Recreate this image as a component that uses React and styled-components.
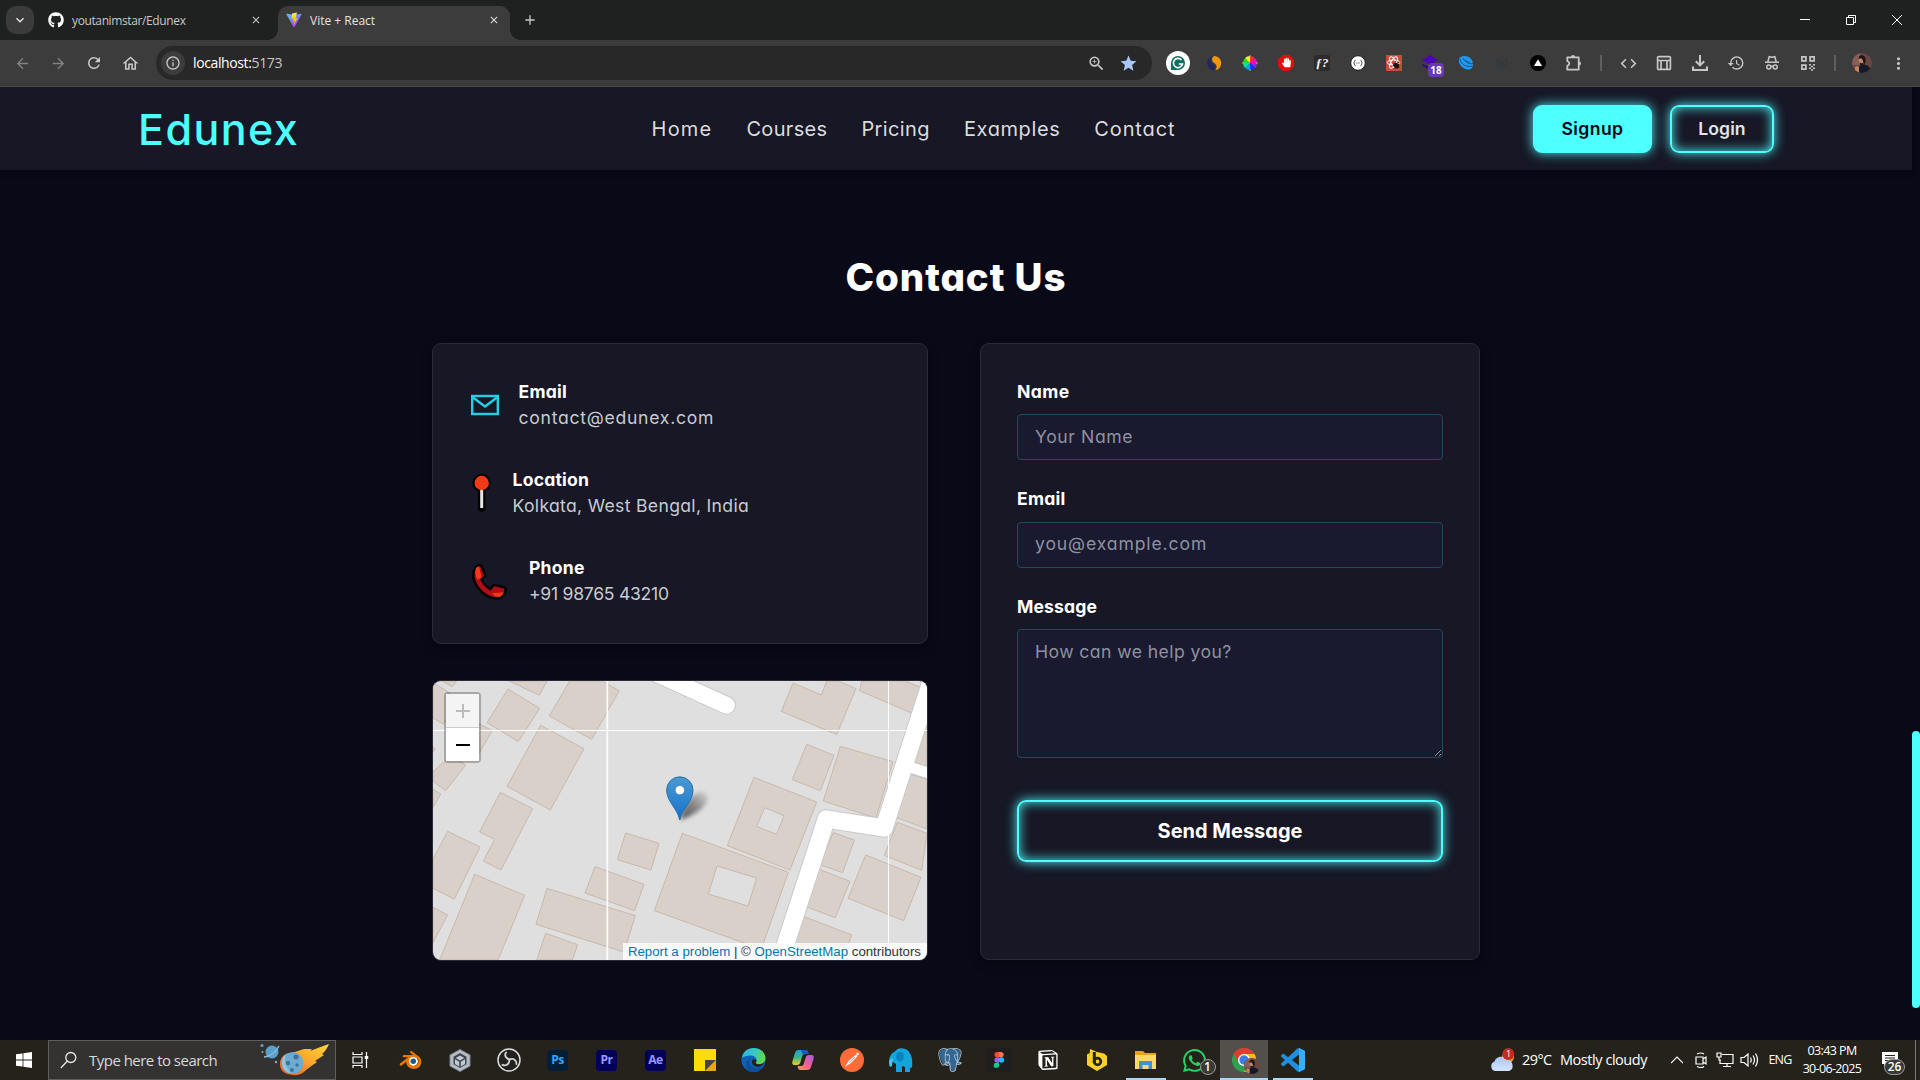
import React from "react";
import styled, { createGlobalStyle } from "styled-components";
import { FaGithub, FaWordpressSimple, FaHandPaper } from "react-icons/fa";
import { SiBlender, SiPostgresql, SiNotion, SiWhatsapp } from "react-icons/si";
import {
  MdArrowBack, MdArrowForward, MdRefresh, MdOutlineHome, MdInfoOutline, MdZoomIn, MdStar,
  MdCode, MdHistory, MdMoreVert, MdClose, MdAdd, MdKeyboardArrowDown,
} from "react-icons/md";

const BG = "#090917";
const CYAN = "#4dffff";
const SYSTEM = '"Open Sans", "Noto Sans", sans-serif';
const BRAND = 'Inter, "Open Sans", sans-serif';

const Global = createGlobalStyle`
  * { box-sizing: border-box; }
  html, body { margin: 0; padding: 0; background: ${BG}; overflow: hidden; }
  button, input, textarea { font: inherit; margin: 0; }
  svg { display: block; flex: none; }
`;

const Screen = styled.div`
  display: flex;
  flex-direction: column;
  width: 1920px;
  height: 1080px;
  overflow: hidden;
  font-family: ${SYSTEM};
`;

const Label = styled.span`
  font-size: ${(p) => p.$size}px;
  font-weight: ${(p) => p.$weight || 400};
  letter-spacing: ${(p) => p.$ls || 0}px;
  color: ${(p) => p.$color || "inherit"};
  line-height: ${(p) => p.$lh || 20}px;
  white-space: nowrap;
`;

/* ---------- browser frame ---------- */

const TabStrip = styled.div`
  display: flex;
  align-items: flex-start;
  height: 40px;
  padding: 6px 0 0 6px;
  background: #1f2120;
  color: #c7c7c7;
`;
const TabMenu = styled.div`
  width: 28px;
  height: 28px;
  border-radius: 10px;
  background: #3a3b3a;
  color: #e6e6e6;
  display: grid;
  place-items: center;
`;
const Tab = styled.div`
  position: relative;
  display: flex;
  align-items: center;
  width: ${(p) => p.$w}px;
  height: 34px;
  padding: 0 ${(p) => p.$pr}px 6px ${(p) => p.$pl}px;
  gap: 8px;
  color: ${(p) => (p.$active ? "#e3e3e3" : "#c7c7c7")};
  background: ${(p) => (p.$active ? "#3c3c3c" : "transparent")};
  border-radius: 10px 10px 0 0;
`;
const TabTitle = styled.div`
  flex: 1;
  display: flex;
  padding-top: 2px;
`;
const TabFoot = styled.i`
  position: absolute;
  bottom: 0;
  ${(p) => p.$side}: -10px;
  width: 10px;
  height: 10px;
  background: radial-gradient(circle at ${(p) => (p.$side === "left" ? "0 0" : "100% 0")}, transparent 9.5px, #3c3c3c 10px);
`;
const NewTab = styled.div`
  width: 20px;
  height: 28px;
  margin-left: 10px;
  display: grid;
  place-items: center;
`;
const WindowButtons = styled.div`
  display: flex;
  margin-left: auto;
  color: #fff;
`;
const WinButton = styled.div`
  width: 46px;
  height: 28px;
  display: grid;
  place-items: center;
`;
const Toolbar = styled.div`
  display: flex;
  align-items: center;
  height: 47px;
  padding: 0 4px;
  background: #3c3c3c;
  border-bottom: 1px solid #4b4b49;
  color: #c7c7c7;
`;
const Slot = styled.div`
  position: relative;
  flex: none;
  width: ${(p) => p.$w || 36}px;
  height: 36px;
  display: grid;
  place-items: center;
  opacity: ${(p) => (p.$dim ? 0.5 : 1)};
`;
const AddressBar = styled.div`
  display: flex;
  align-items: center;
  width: 996px;
  height: 34px;
  margin: 0 8px;
  padding: 0 8px 0 5px;
  border-radius: 17px;
  background: #282828;
`;
const SiteInfo = styled.div`
  width: 24px;
  height: 24px;
  margin-right: 8px;
  border-radius: 12px;
  background: #3c3c3c;
  display: grid;
  place-items: center;
`;
const Url = styled.div`
  flex: 1;
  display: flex;
  color: #c7c7c7;
`;
const Divider = styled.div`
  width: 2px;
  height: 16px;
  margin: 0 8px;
  background: #5e5e5e;
`;
const ExtBadge = styled.div`
  position: absolute;
  left: 16px;
  top: 18px;
  width: 16px;
  height: 14px;
  border-radius: 4px;
  background: #6a37b8;
  color: #fff;
  font: 700 10px/14px ${SYSTEM};
  text-align: center;
`;
const FontExt = styled.div`
  width: 16px;
  height: 16px;
  border-radius: 2px;
  background: #2c2c2c;
  color: #f2f2f2;
  font: italic 700 13px/15px "Liberation Serif", serif;
  text-align: center;
`;

/* ---------- page ---------- */

const Viewport = styled.div`
  display: flex;
  height: 953px;
  background: ${BG};
  font-family: ${BRAND};
  font-feature-settings: "cv11";
`;
const Page = styled.div`
  width: 1912px;
`;
const Scrollbar = styled.div`
  width: 8px;
  padding-top: 644px;
`;
const Thumb = styled.div`
  height: 277px;
  border-radius: 4px;
  background: ${CYAN};
`;
const Header = styled.header`
  display: flex;
  align-items: center;
  justify-content: space-between;
  height: 83px;
  padding: 0 138px;
  background: #171726;
  box-shadow: 0 2px 6px rgba(0, 0, 0, 0.25);
`;
const Logo = styled.div`
  display: flex;
  width: 156px;
`;
const Nav = styled.nav`
  display: flex;
  gap: 34px;
`;
const Actions = styled.div`
  display: flex;
  gap: 18px;
`;
const GlowButton = styled.button`
  width: ${(p) => p.$w}px;
  height: ${(p) => p.$h}px;
  padding: 0;
  display: flex;
  align-items: center;
  justify-content: center;
  border: 2px solid ${CYAN};
  border-radius: 9px;
  color: ${(p) => (p.$filled ? "#080815" : "#e4e4e6")};
  background: ${(p) => (p.$filled ? CYAN : "transparent")};
  box-shadow: 0 0 12px rgba(77, 255, 255, 0.95)${(p) => (p.$filled ? "" : ", inset 0 0 12px rgba(77, 255, 255, 0.95)")};
`;
const Section = styled.section`
  display: flex;
  flex-direction: column;
  align-items: center;
  padding-top: 77px;
`;
const Columns = styled.div`
  display: flex;
  align-items: flex-start;
  justify-content: space-between;
  width: 1048px;
  margin-top: 36px;
`;
const LeftColumn = styled.div`
  display: flex;
  flex-direction: column;
  gap: 36px;
  width: 496px;
`;
const Card = styled.div`
  width: ${(p) => p.$w}px;
  height: ${(p) => p.$h}px;
  padding: 35px 36px;
  border: 1px solid #2a2a38;
  border-radius: 9px;
  background: #171725;
  box-shadow: 0 4px 12px rgba(0, 0, 0, 0.2);
`;
const InfoRow = styled.div`
  display: flex;
  gap: 19px;
  height: 88px;
`;
const InfoIcon = styled.div`
  width: ${(p) => p.$w}px;
  height: 52px;
  display: flex;
  align-items: center;
`;
const InfoText = styled.div`
  display: flex;
  flex-direction: column;
`;
const MapCard = styled.div`
  position: relative;
  width: 496px;
  height: 281px;
  border: 1px solid #2a2a38;
  border-radius: 9px;
  overflow: hidden;
  font-family: "Liberation Sans", Arial, sans-serif;
`;
const ZoomControl = styled.div`
  position: absolute;
  left: 11px;
  top: 11px;
  width: 37px;
  border: 2px solid rgba(0, 0, 0, 0.25);
  border-radius: 4px;
  background-clip: padding-box;
`;
const ZoomKey = styled.div`
  height: ${(p) => p.$h}px;
  display: grid;
  place-items: center;
  background: ${(p) => (p.$off ? "#f4f4f4" : "#fff")};
  border-bottom: ${(p) => (p.$off ? "1px solid #ccc" : "0")};
`;
const Attribution = styled.div`
  position: absolute;
  right: 0;
  bottom: 0;
  height: 17px;
  padding: 0 6px 0 5px;
  background: rgba(255, 255, 255, 0.8);
  color: #333;
  font-size: 13.25px;
  line-height: 17px;
  white-space: nowrap;
  a { color: #0078a8; }
`;
const Field = styled.div`
  display: flex;
  flex-direction: column;
  gap: ${(p) => p.$gap}px;
  height: ${(p) => p.$h}px;
`;
const inputLook = `
  width: 426px;
  border: 1px solid #214a5c;
  border-radius: 4px;
  background: #19192f;
  color: #fff;
  outline: none;
  font-family: ${BRAND};
  font-size: 17.6px;
  line-height: 26px;
  font-feature-settings: "cv11";
  &::placeholder { color: #8e92a0; opacity: 1; }
`;
const Input = styled.input`
  ${inputLook}
  height: 46px;
  padding: 0 17px ${(p) => p.$lift}px;
  letter-spacing: ${(p) => p.$ls}px;
`;
const TextArea = styled.textarea`
  ${inputLook}
  height: 129px;
  padding: 9px 17px;
  letter-spacing: ${(p) => p.$ls}px;
`;

/* ---------- taskbar ---------- */

const Taskbar = styled.div`
  display: flex;
  align-items: stretch;
  height: 40px;
  background: #25221c;
  color: #fff;
`;
const Start = styled.div`
  width: 48px;
  display: grid;
  place-items: center;
`;
const Search = styled.div`
  display: flex;
  align-items: center;
  width: 288px;
  padding: 0 5px 0 11px;
  gap: 12px;
  border: 1px solid #5f5e5c;
  background: #333231;
  color: #d9d9d9;
  & > span { flex: 1; }
`;
const AppSlot = styled.div`
  position: relative;
  width: 48px;
  margin-right: ${(p) => p.$gap || 1}px;
  display: grid;
  place-items: center;
  background: ${(p) => (p.$active ? "#53504b" : "transparent")};
  &::after {
    content: "";
    display: ${(p) => (p.$open ? "block" : "none")};
    position: absolute;
    bottom: 0;
    left: ${(p) => (p.$active ? 0 : 4)}px;
    right: ${(p) => (p.$active ? 0 : 4)}px;
    height: 2px;
    background: #a9d8f5;
  }
`;
const Adobe = styled.div`
  width: 21px;
  height: 21px;
  border-radius: 4px;
  background: ${(p) => p.$bg};
  color: ${(p) => p.$fg};
  font: 700 12px/20px ${SYSTEM};
  letter-spacing: -0.5px;
  text-align: center;
`;
const CountBadge = styled.div`
  position: absolute;
  left: ${(p) => p.$x}px;
  top: ${(p) => p.$y}px;
  width: ${(p) => p.$w}px;
  height: 16px;
  border: 1px solid #9a9a98;
  border-radius: 8px;
  background: #3a3936;
  font: 600 12px/14px ${SYSTEM};
  text-align: center;
`;
const Tray = styled.div`
  display: flex;
  align-items: center;
  margin-left: auto;
`;
const TrayItem = styled.div`
  position: relative;
  width: ${(p) => p.$w}px;
  height: 40px;
  display: flex;
  align-items: center;
  justify-content: ${(p) => p.$align || "center"};
`;
const Clock = styled.div`
  width: 66px;
  display: flex;
  flex-direction: column;
  align-items: center;
`;
const ShowDesktop = styled.div`
  width: 5px;
  height: 40px;
  border-left: 1px solid #7a7873;
`;
const ChromeFace = styled.div`
  position: absolute;
  left: 24px;
  top: 18px;
`;
const WeatherBadge = styled.span`
  position: absolute;
  left: 15px;
  top: 8px;
  width: 7px;
  font-size: 9px;
  line-height: 12px;
  text-align: center;
`;

/* ---------- drawings ---------- */

const ViteLogo = () => (
  <svg width="16" height="16" viewBox="0 0 32 32">
    <defs>
      <linearGradient id="va" x1="0" y1="0" x2="0.6" y2="1"><stop offset="0" stopColor="#41d1ff" /><stop offset="1" stopColor="#bd34fe" /></linearGradient>
      <linearGradient id="vb" x1="0" y1="0" x2="0" y2="1"><stop offset="0" stopColor="#ffea83" /><stop offset="0.2" stopColor="#ffdd35" /><stop offset="1" stopColor="#ffa800" /></linearGradient>
    </defs>
    <path d="M31 5 17 30c-.4.8-1.4.8-2 0L1 5c-.4-.8.2-2 1.200-1.600L16 6l13.800-2.600C31 3 31.600 4.200 31 5Z" fill="url(#va)" />
    <path d="M22 1 12 3l-.8 11 4-.8-1 5.500 3-.8-1.600 7.600L23 12l-4 .8Z" fill="url(#vb)" />
  </svg>
);
const Grammarly = () => (
  <svg width="24" height="24" viewBox="0 0 24 24">
    <circle cx="12" cy="12" r="12" fill="#fff" />
    <path d="M5 19V12a7 7 0 1 1 7 7Z" fill="#10705f" />
    <path d="M15.500 9A4.600 4.600 0 1 0 16.500 13H12.800" fill="none" stroke="#fff" strokeWidth="1.600" />
  </svg>
);
const SwirlExt = () => (
  <svg width="16" height="16" viewBox="0 0 16 16">
    <path d="M7.500 1A4.800 4.800 0 0 0 7 9.500 3.300 3.300 0 0 1 8 15.500 7.300 7.300 0 0 1 3.500 3 5 5 0 0 1 7.500 1Z" fill="#20295a" />
    <path d="M8 1c4 0 7.200 3 7.200 7S12.500 15 9 15.300C11.500 13 11 9.500 8.300 8 5.500 6.300 5.500 2.500 8 1Z" fill="#f6940c" />
  </svg>
);
const WHEEL = ["#ff2d2d", "#ff00c8", "#8a2be2", "#1030ff", "#00a2ff", "#00e5a0", "#20e020", "#e8ff20"];
const ColorWheel = () => (
  <svg width="16" height="16" viewBox="-8 -8 16 16">
    {WHEEL.map((c, i) => (
      <path key={c} d="M0 0V-7A7 7 0 0 1 4.950 -4.950Z" fill={c} transform={`rotate(${i * 45})`} />
    ))}
    <path d="M0-8v2M0 8v-2M-8 0h2M8 0h-2" stroke="#aaa" />
  </svg>
);
const AdBlock = () => (
  <svg width="16" height="16" viewBox="0 0 16 16">
    <path d="M4.700 0h6.600L16 4.700v6.600L11.300 16H4.700L0 11.300V4.700Z" fill="#e40d0d" />
    <g transform="translate(3.400 2.600)"><FaHandPaper size={10} color="#fff" /></g>
  </svg>
);
const JsonExt = () => (
  <svg width="16" height="16" viewBox="0 0 16 16">
    <circle cx="8" cy="8" r="7.300" fill="#fff" stroke="#1d1d1d" strokeWidth="1" />
    <path d="M5.500 5.300c-1.500 0-.6 2.100-1.800 2.700 1.200.6.3 2.700 1.800 2.700M10.500 5.300c1.500 0 .6 2.100 1.800 2.700-1.200.6-.3 2.700-1.800 2.700M6.500 8h1M8.500 8h1" fill="none" stroke="#333" />
  </svg>
);
const ReactExt = () => (
  <svg width="16" height="16" viewBox="0 0 16 16">
    <rect width="16" height="16" fill="#cf4a36" />
    <g fill="none" stroke="#fff" strokeWidth="1">
      <ellipse cx="7.500" cy="7.500" rx="6.300" ry="2.500" />
      <ellipse cx="7.500" cy="7.500" rx="6.300" ry="2.500" transform="rotate(60 7.500 7.500)" />
      <ellipse cx="7.500" cy="7.500" rx="6.300" ry="2.500" transform="rotate(120 7.500 7.500)" />
    </g>
    <ellipse cx="10.200" cy="10.600" rx="2.600" ry="3.200" fill="#1b1513" transform="rotate(-35 10.200 10.600)" />
    <path d="M6.500 10.500 13 9.500M7.500 13.500 13.500 12M9 7l1.500-1.500M12 8l1.500-1" stroke="#1b1513" strokeWidth=".8" />
  </svg>
);
const CubeExt = () => (
  <svg width="16" height="16" viewBox="0 0 16 16">
    <path d="M8 0 16 5 8 9.500 0 5Z" fill="#4a06b8" />
    <path d="M1 9 8 13v2L0 10.500Z" fill="#2d0580" />
  </svg>
);
const DiscExt = () => (
  <svg width="16" height="16" viewBox="0 0 16 16">
    <path d="M4 1.500C9-.5 15.500 4 15 9.500c0 3-2 5-4.500 5C5 14.500 1 10 .8 5.500.8 3.500 2 2 4 1.500Z" fill="#1c9bf0" />
    <path d="M2 4c1 5 6 9 12.500 7M5 3c1 3 5 6.500 10 5.500M7 4.500c1 2 3 3 5 2.500" fill="none" stroke="#174e80" strokeWidth=".9" />
  </svg>
);
const VercelExt = () => (
  <svg width="16" height="16" viewBox="0 0 16 16"><circle cx="8" cy="8" r="8" fill="#000" /><path d="M8 4.300 12 11H4Z" fill="#fff" /></svg>
);
const PuzzleIcon = () => (
  <svg width="18" height="18" viewBox="0 0 18 18">
    <path d="M2.300 3.300h11.400v12.400H2.300v-3.900q2-.6 2-2.300t-2-2.300Z" fill="none" stroke="currentColor" strokeWidth="1.800" strokeLinejoin="round" />
    <path d="M6 3a2 2 0 0 1 4 0ZM14 7.500a2 2 0 0 1 0 4Z" fill="currentColor" />
  </svg>
);
const PanelIcon = () => (
  <svg width="16" height="16" viewBox="0 0 16 16" fill="none" stroke="currentColor" strokeWidth="1.700">
    <rect x="1.600" y="1.600" width="12.800" height="12.800" rx="1" /><path d="M1.600 5.500h12.800M5 5.500v9M11 5.500v9" />
  </svg>
);
const Download = () => (
  <svg width="16" height="16" viewBox="0 0 16 16" fill="none" stroke="currentColor" strokeWidth="2">
    <path d="M8 0v10M3.800 6.200 8 10.400l4.200-4.200M1 11.500V15h14v-3.500" />
  </svg>
);
const Incognito = () => (
  <svg width="16" height="16" viewBox="0 0 16 16" fill="none" stroke="currentColor" strokeWidth="1.500">
    <path d="M1 7.200h14" /><path d="M3.800 7 5.200 1.700 8 2.300l2.800-.6L12.200 7" />
    <circle cx="4.800" cy="12" r="2" /><circle cx="11.200" cy="12" r="2" /><path d="M6.800 11.500q1.200-.6 2.400 0" />
  </svg>
);
const QrIcon = () => (
  <svg width="16" height="16" viewBox="0 0 16 16" fill="none" stroke="currentColor" strokeWidth="1.700">
    <path d="M1.900 1.900h4v4h-4zM10.100 1.900h4v4h-4zM1.900 10.100h4v4h-4z" />
    <path d="M9 9.800h2M13 9.800h2M11 11.500h2M9 13.300h2M13 13.300h2M11 15h2" strokeWidth="1.500" />
  </svg>
);
const Portrait = ({ size }) => (
  <svg width={size} height={size} viewBox="0 0 20 20">
    <defs><clipPath id="pc"><circle cx="10" cy="10" r="10" /></clipPath></defs>
    <g clipPath="url(#pc)">
      <rect width="20" height="20" fill="#6a4743" />
      <rect width="8" height="12" fill="#866057" />
      <path d="M6 20c0-6 2-8.500 5-8.500S19 13 20 20Z" fill="#151a2b" />
      <ellipse cx="9.800" cy="7.500" rx="2.900" ry="4" fill="#c28768" />
      <path d="M6.500 5.500C6.500 1 13.500 1 13.500 6v3l-1.500 3-1-4-1-2.500Z" fill="#1c1416" />
      <path d="M7.500 9.500q2 1.500 4 0l-.5 3H8.500Z" fill="#241818" />
      <path d="M3 14q2-1.500 4 0v6H3Z" fill="#c9825c" />
    </g>
  </svg>
);
const Envelope = () => (
  <svg width="32" height="24" viewBox="0 0 32 24" fill="none" stroke="#1fd0e8" strokeWidth="2.400">
    <rect x="3.200" y="3" width="25.600" height="18" /><path d="M4 4.500 16 13.500 28 4.500" />
  </svg>
);
const PinEmoji = () => (
  <svg width="25" height="42" viewBox="0 0 25 42">
    <path d="M12.700 12V36" stroke="#000" strokeWidth="7.500" strokeLinecap="round" />
    <circle cx="12.700" cy="11" r="9.200" fill="#000" />
    <path d="M12.700 14V36" stroke="#e6e6e6" strokeWidth="3" />
    <circle cx="12.700" cy="11" r="7.200" fill="#f03a17" />
  </svg>
);
const PhoneEmoji = () => (
  <svg width="43" height="41" viewBox="1 1.500 39 37.500">
    <path d="M7 7.500c1-2 4-2.700 5.200-1.500l3.300 8.200c.4 1.200-.3 2-1.300 2.600l-2 1.200c1 3.500 4.500 7 8.300 9.200l2-2.800c.7-1 1.500-1.200 2.500-.9l8.700 2.300c1.700 2-.5 8-4.500 9.500C17 38 3 24 5 11.500Z" fill="#b00d18" stroke="#000" strokeWidth="2.200" strokeLinejoin="round" />
    <path d="M7 8.500c.7-1.500 2-1.900 3-1.900L12.500 17 8.500 18.500C6.500 14.500 6 11 7 8.500ZM22 31l10.500-1c-.5 2-1.700 3.500-3.200 4.200-2.500 1-5.500-.7-7.300-3.200Z" fill="#f03a17" />
  </svg>
);

const BUILDINGS = [
  "24,38 60,60 110,95 55,162 24,144", "50,33 95,33 82,50", "252,33 366,33 343,76", "249,57 344,115 280,215 186,158",
  "434,33 530,33 583,62 500,208 373,138", "347,166 477,236 376,420 246,349", "160,160 202,182 150,270 100,240",
  "80,255 122,285 62,362 24,334 24,305", "24,358 47,372 24,412", "24,230 31,238 24,246",
  "226,367 323,416 228,600 175,573 209,508 164,486", "68,484 165,531 88,687 24,655 24,568", "149,613 299,676 219,870 44,870",
  "24,712 68,735 24,818", "366,655 631,737 597,846 333,763", "510,590 657,643 629,722 480,669",
  "362,790 458,824 442,870 335,870", "602,489 702,520 678,600 577,569", "772,490 1090,607 1008,840 960,820 688,722",
  "987,322 1175,396 1095,600 907,527", "1104,39 1189,75 1205,33 1240,33 1293,56 1235,194 1069,124",
  "1311,33 1440,33 1487,52 1460,129 1303,62", "1145,223 1227,256 1186,362 1102,329", "1246,229 1404,275 1353,444 1195,393",
  "1500,183 1506,180 1506,292 1462,277", "1456,312 1506,328 1506,477 1410,441", "1417,457 1506,490 1490,601 1378,556",
  "1322,555 1488,622 1436,752 1269,685", "1225,488 1288,510 1253,608 1184,584", "1180,597 1275,634 1231,743 1141,709",
  "1132,738 1281,795 1268,825 1100,825",
];
const MapTiles = () => (
  <svg width="494" height="279" viewBox="24 33 1482 837">
    <defs>
      <linearGradient id="mk" x1="0" y1="0" x2="0" y2="1"><stop offset="0" stopColor="#4a9bd4" /><stop offset="1" stopColor="#1470cc" /></linearGradient>
      <linearGradient id="ms" x1="0" y1="1" x2="1" y2="0"><stop offset="0" stopColor="#000" stopOpacity=".65" /><stop offset=".5" stopColor="#000" stopOpacity=".4" /><stop offset="1" stopColor="#000" stopOpacity=".05" /></linearGradient>
      <filter id="soft" x="-50%" y="-50%" width="200%" height="200%"><feGaussianBlur stdDeviation="6" /></filter>
    </defs>
    <rect x="24" y="33" width="1482" height="837" fill="#dfdfdf" />
    <g fill="#d9d0c9" stroke="#c9b8ac" strokeWidth="3">
      {BUILDINGS.map((p) => <polygon key={p} points={p} />)}
    </g>
    <g fill="#dfdfdf" stroke="#c9b8ac" strokeWidth="3">
      <polygon points="1019,413 1077,437 1055,493 995,469" />
      <polygon points="876,588 995,624 969,708 850,672" />
    </g>
    {[["#c9c9c9", 0], ["#fff", 1]].map(([c, k]) => (
      <g key={c} fill="none" stroke={c} strokeLinecap="round" strokeLinejoin="round">
        <path d="M680 4 905 106" strokeWidth={k ? 50 : 56} />
        <path d="M1055 905 1204 447 1377 474 1524 18" strokeWidth={k ? 52 : 58} />
        <path d="M1440 287 1530 315" strokeWidth={k ? 32 : 38} />
      </g>
    ))}
    <path d="M546 33V870M24 181.500H1506M1390.500 33V870" stroke="#fff" strokeWidth="3" fill="none" />
    <path d="M548 33V870" stroke="#fff" strokeWidth="3" />
    <path d="M766 450Q785 370 830 366q28 10 12 36Q820 432 766 450Z" fill="url(#ms)" filter="url(#soft)" />
    <path d="M764.500 450C757 415 725 395 725 360a39.500 39.500 0 0 1 79 0c0 35-32 55-39.500 90Z" fill="url(#mk)" stroke="#2e6f9f" strokeWidth="3" />
    <circle cx="764.500" cy="360.500" r="14" fill="#fff" stroke="#2b76ad" strokeWidth="2" />
  </svg>
);

const WindowsLogo = () => (
  <svg width="16" height="16" viewBox="0 0 16 16" fill="#fff"><path d="M0 2.300 6.600 1.400V7.600H0ZM7.400 1.300 16 0V7.600H7.400ZM0 8.400H6.600V14.600L0 13.700ZM7.400 8.400H16V16L7.400 14.700Z" /></svg>
);
const SearchGlass = () => (
  <svg width="17" height="18" viewBox="0 0 17 18" fill="none" stroke="#e8e8e8" strokeWidth="1.300"><circle cx="10.800" cy="6.500" r="5" /><path d="M7.200 10.200 .8 17" /></svg>
);
const Comet = () => (
  <svg width="70" height="34" viewBox="0 0 70 34">
    <defs><linearGradient id="cm" x1="0" y1="1" x2="1" y2="0"><stop offset="0" stopColor="#f0522a" /><stop offset=".5" stopColor="#fba52c" /><stop offset="1" stopColor="#ffd83a" /></linearGradient></defs>
    <circle cx="12" cy="9" r="6.500" fill="#5aa0c8" /><path d="M4 14Q14 13 19 3" fill="none" stroke="#86bedc" strokeWidth="1.400" />
    <circle cx="2" cy="2.500" r="1.600" fill="#5aa0c8" /><circle cx="2.500" cy="9" r="1" fill="#6fb2d8" /><circle cx="16" cy="19" r="1.200" fill="#6fb2d8" />
    <path d="M26 11Q36 9 44 6L52 6 50 8Q60 4 69 1 66 8 62 11L64 12 55 18 57 19Q50 24 46 27 41 33 33 32 20 31 20 21 20 14 26 11Z" fill="url(#cm)" />
    <circle cx="32.500" cy="20" r="10.800" fill="#6cacd2" /><path d="M26 11.500a10.800 10.800 0 0 0 5 19Q22 20 26 11.500Z" fill="#90c6e2" />
    <circle cx="36" cy="14" r="2.500" fill="#41739a" /><circle cx="28" cy="20" r="2.200" fill="#41739a" /><circle cx="37" cy="22" r="1.700" fill="#41739a" /><circle cx="32" cy="27" r="2" fill="#41739a" />
  </svg>
);
const TaskViewIcon = () => (
  <svg width="17" height="16" viewBox="0 0 17 16" fill="none" stroke="#fff" strokeWidth="1.200">
    <path d="M1 0v2.500h9V0M1 16v-2.500h9V16M1 5h9v6H1zM14.500 0v16" /><path d="M14.500 4v3" strokeWidth="3.500" />
  </svg>
);
const BlenderIcon = () => (
  <svg width="23" height="22" viewBox="0 0 24 24">
    <circle cx="15" cy="13.500" r="5" fill="#fff" />
    <SiBlender size={24} color="#ea7600" />
    <circle cx="15" cy="13.300" r="4.600" fill="#fff" /><circle cx="15" cy="13.300" r="3" fill="#265787" />
  </svg>
);
const UnityIcon = () => (
  <svg width="22" height="23" viewBox="0 0 22 23">
    <path d="M11 .5 21 6v11L11 22.500 1 17V6Z" fill="#b4bcc4" stroke="#7c8690" />
    <path d="M11 4 17.500 7.700v7.600L11 19 4.500 15.300V7.700Z" fill="#3e464e" />
    <path d="M11 6.500 15.300 9 11 11.500 6.700 9ZM6 10.300l4.200 2.500v4.700L6 15ZM16 10.300v4.700l-4.200 2.500v-4.700Z" fill="#c3cad1" />
  </svg>
);
const ObsIcon = () => (
  <svg width="24" height="24" viewBox="0 0 24 24">
    <circle cx="12" cy="12" r="11" fill="#23211f" stroke="#dcdcdc" strokeWidth="1.500" />
    <g fill="none" stroke="#cfcfcf" strokeWidth="1.900" strokeLinecap="round">
      <path d="M9 4.500c-2 3 .2 6.600 4 6.800" />
      <path d="M12.800 11.500c3.500-1.800 7 .8 6.700 4.500" />
      <path d="M12.500 12c-.2 4-3.500 6.500-7 4.800" />
    </g>
  </svg>
);
const StickyIcon = () => (
  <svg width="22" height="22" viewBox="0 0 22 22"><path d="M0 0h22v11L11 22H0Z" fill="#fddc0a" /><path d="M11 22V11h11Z" fill="#45433f" /><path d="M11 22 22 11v11Z" fill="#e5ab0c" /></svg>
);
const EdgeIcon = () => (
  <svg width="25" height="24" viewBox="0 0 24 24">
    <defs><linearGradient id="eg" x1="0" y1="0" x2="1" y2=".3"><stop offset="0" stopColor="#28b5e8" /><stop offset=".6" stopColor="#38c8c0" /><stop offset="1" stopColor="#62d84a" /></linearGradient></defs>
    <circle cx="12" cy="12" r="12" fill="#0c62b8" />
    <path d="M.3 10C1.500 3.500 6.500 0 12 0c7 0 12 4.800 12 10 0 4-3 6.300-6.500 6.300-2.500 0-4-1-3-2.300C16.500 10.500 13 7.500 9 7.500 5 7.500 1.500 8.500.3 10Z" fill="url(#eg)" />
    <path d="M9 10c-3.500 5 .5 10.500 6.500 10.500 2.500 0 5-1 6.500-2.500-2 3.500-6 6-10 6-5 0-8.500-5-7.500-9Q5.500 11 9 10Z" fill="#0d4f9a" />
    <path d="M14.500 14c-1 1.300.5 2.300 3 2.300 2 0 4-.8 5.200-2.300-1 4-6 6-9 4.500-3.500-1.500-4.500-6-2-7 2-.8 4.300 1 2.800 2.500Z" fill="#25221c" />
  </svg>
);
const CopilotIcon = () => (
  <svg width="22" height="22" viewBox="0 0 22 22">
    <defs>
      <linearGradient id="ca" x1="0" y1="0" x2="0" y2="1"><stop offset="0" stopColor="#1b9fe8" /><stop offset=".5" stopColor="#3bb782" /><stop offset="1" stopColor="#f3c92d" /></linearGradient>
      <linearGradient id="cb" x1="1" y1="0" x2="0" y2="1"><stop offset="0" stopColor="#a05be8" /><stop offset=".5" stopColor="#ee5f94" /><stop offset="1" stopColor="#f99b4c" /></linearGradient>
    </defs>
    <path d="M6.500 1h7c2 0 2.500 1.500 3 4H13c-2 0-2.500 1-3 3L8.500 13c-.5 2-1.500 3-3.500 3H3c-3 0-3-2-2.500-4L3 4c.7-2 1.700-3 3.500-3Z" fill="url(#ca)" />
    <path d="M15.500 21h-7C6.500 21 6 19.500 5.500 17H9c2 0 2.500-1 3-3L13.500 9c.5-2 1.500-3 3.500-3h2c3 0 3 2 2.500 4L19 18c-.7 2-1.700 3-3.500 3Z" fill="url(#cb)" />
    <path d="M9 1h5c1.500 0 2 1.500 2.500 4H13q-1.500 0-2 1Z" fill="#1558c8" />
  </svg>
);
const PostmanIcon = () => (
  <svg width="24" height="24" viewBox="0 0 24 24"><circle cx="12" cy="12" r="12" fill="#ff6c37" /><path d="M5 19 8.500 13 16 6.500 17.500 8 11 15ZM16 6l2-1.500 1 1.500-1.200 1.500Z" fill="#fff" /><path d="M9 15 15 9" stroke="#ff6c37" strokeWidth=".8" /></svg>
);
const ElephantIcon = () => (
  <svg width="24" height="24" viewBox="0 0 24 24"><path d="M0 14Q0 6 6 3.500 9-.5 14 .5q5 .5 7 5 3 4 2 14l-2 .5v4h-5v-5l-3-1v6H7v-8L4 14l-2 2Z" fill="#12a5dc" /><path d="M9 4q-4 5 0 9 3 2 5-1 2-5-1-8Z" fill="#0b83bd" /><path d="M4 10q-1 5-1 8l-2 1Q-.5 16 .5 12Z" fill="#4cc6ee" /></svg>
);
const PostgresIcon = () => (
  <svg width="24" height="24" viewBox="0 0 24 24">
    <path d="M2 3Q5 0 11 1.500 19-.5 22 2.500q2 3-1.500 10.500l2.500 2-5 2-1 5.500-4 .5-1.500-7L8 17Q5 18 3.500 13 .5 6 2 3Z" fill="#336791" />
    <SiPostgresql size={24} color="#b9cfe0" />
  </svg>
);
const FigmaIcon = () => (
  <svg width="24" height="24" viewBox="0 0 24 24"><rect width="24" height="24" rx="3" fill="#1e1e1e" />
    <path d="M12 4H9.500a2.700 2.700 0 0 0 0 5.300H12Z" fill="#f24e1e" /><path d="M12 4h2.500a2.700 2.700 0 0 1 0 5.300H12Z" fill="#ff7262" />
    <path d="M12 9.300H9.500a2.700 2.700 0 0 0 0 5.300H12Z" fill="#a259ff" /><circle cx="14.500" cy="12" r="2.650" fill="#1abcfe" /><path d="M12 14.600H9.500A2.650 2.650 0 1 0 12 17.300Z" fill="#0acf83" />
  </svg>
);
const HexB = () => (
  <svg width="20" height="22" viewBox="0 0 20 22"><path d="M0 5.500 2.500 4v3.500L3 0l7 3 7 1.500L20 7v9l-10 6L0 16Z" fill="#fbd02c" /><path d="M7.300 3v11" stroke="#25221c" strokeWidth="3" /><circle cx="10.500" cy="12.500" r="3.300" fill="none" stroke="#25221c" strokeWidth="2.800" /></svg>
);
const FolderIcon = () => (
  <svg width="23" height="20" viewBox="0 0 23 20"><path d="M1 1h8l2 2h11v16H1Z" fill="#e5a50e" /><path d="M1 5h21v14H1Z" fill="#ffd968" /><path d="M5 19v-8h13v8h-3.500v-4h-6v4Z" fill="#3d92de" /></svg>
);
const ChromeIcon = () => (
  <svg width="24" height="24" viewBox="0 0 24 24">
    <circle cx="12" cy="12" r="12" fill="#2ca24c" /><path d="M12 12 1.600 6A12 12 0 0 1 22.400 6Z" fill="#e33b2e" /><path d="M12 6H22.400A12 12 0 0 1 12 24L17.200 15Z" fill="#fbc116" />
    <path d="M1.600 6 6.800 15 12 6Z" fill="#e33b2e" /><circle cx="12" cy="12" r="6" fill="#fff" /><circle cx="12" cy="12" r="4.700" fill="#3b7de8" />
  </svg>
);
const CodeIcon = () => (
  <svg width="24" height="24" viewBox="0 0 24 24">
    <path fill="#1f8fe0" d="M23.150 2.587L18.210.21a1.494 1.494 0 0 0-1.705.29l-9.460 8.630-4.120-3.128a.999.999 0 0 0-1.276.057L.327 7.261A1 1 0 0 0 .326 8.740L3.899 12 .326 15.260a1 1 0 0 0 .001 1.479L1.650 17.940a.999.999 0 0 0 1.276.057l4.120-3.128 9.460 8.630a1.492 1.492 0 0 0 1.704.290l4.942-2.377A1.500 1.500 0 0 0 24 20.060V3.939a1.500 1.500 0 0 0-.850-1.352zm-5.146 14.861L10.826 12l7.178-5.448v10.896z" />
    <path fill="#3aaef5" d="M18 .1 23.150 2.587a1.500 1.500 0 0 1 .85 1.352V20.060a1.500 1.500 0 0 1-.85 1.352L18 23.900Z" />
  </svg>
);
const WeatherIcon = () => (
  <svg width="25" height="24" viewBox="0 0 25 24"><defs><linearGradient id="cl" x1="0" y1="0" x2="0" y2="1"><stop offset="0" stopColor="#a9c6f5" /><stop offset="1" stopColor="#d5e4fc" /></linearGradient></defs>
    <circle cx="18" cy="9" r="6" fill="#f19a1a" />
    <path d="M5 23a5 5 0 0 1-.5-9.500A7 7 0 0 1 17 12a5.700 5.700 0 0 1 2 11Z" fill="url(#cl)" /><circle cx="18.300" cy="6" r="6" fill="#c42b1c" /></svg>
);
const TrayGlyph = ({ children, w = 18 }) => (
  <svg width={w} height="16" viewBox={`0 0 ${w} 16`} fill="none" stroke="#fff" strokeWidth="1.200">{children}</svg>
);

const NAV = [["Home", 1.2], ["Courses", 0.33], ["Pricing", 0.38], ["Examples", 0.6], ["Contact", 0.87]];
const INFO = [
  { icon: <Envelope />, w: 30.5, title: "Email", body: "contact@edunex.com", ls: 0.73 },
  { icon: <PinEmoji />, w: 24.5, title: "Location", body: "Kolkata, West Bengal, India", ls: 0.32 },
  { icon: <PhoneEmoji />, w: 41, title: "Phone", body: "+91 98765 43210", ls: -0.28 },
];
const EXTENSIONS = [
  <Grammarly />, <SwirlExt />, <ColorWheel />, <AdBlock />, <FontExt>ƒ?</FontExt>, <JsonExt />, <ReactExt />,
  <><CubeExt /><ExtBadge>18</ExtBadge></>, <DiscExt />, <FaWordpressSimple size={12} color="#30373d" />, <VercelExt />,
  <PuzzleIcon />,
];
const APPS = [
  { icon: <BlenderIcon /> }, { icon: <UnityIcon /> }, { icon: <ObsIcon /> },
  { icon: <Adobe $bg="#001e36" $fg="#31a8ff">Ps</Adobe> }, { icon: <Adobe $bg="#00005b" $fg="#9999ff">Pr</Adobe> }, { icon: <Adobe $bg="#00005b" $fg="#9999ff">Ae</Adobe> },
  { icon: <StickyIcon /> }, { icon: <EdgeIcon /> }, { icon: <CopilotIcon /> }, { icon: <PostmanIcon /> }, { icon: <ElephantIcon /> },
  { icon: <PostgresIcon /> }, { icon: <FigmaIcon /> }, { icon: <SiNotion size={20} color="#fff" /> }, { icon: <HexB /> },
  { icon: <FolderIcon />, open: true },
  { icon: <><SiWhatsapp size={23} color="#25d366" /><CountBadge $x={29} $y={19} $w={16}>1</CountBadge></> },
  { icon: <><ChromeIcon /><ChromeFace><Portrait size={16} /></ChromeFace></>, open: true, active: true },
  { icon: <CodeIcon />, open: true },
];

export default function App() {
  return (
    <Screen>
      <Global />
      <TabStrip>
        <TabMenu><MdKeyboardArrowDown size={16} /></TabMenu>
        <Tab $w={244} $pl={14} $pr={16.5}>
          <FaGithub size={16} color="#fff" />
          <TabTitle><Label $size={12} $ls={-0.38}>youtanimstar/Edunex</Label></TabTitle>
          <MdClose size={12} />
        </Tab>
        <Tab $w={232} $pl={8} $pr={10} $active>
          <TabFoot $side="left" />
          <ViteLogo />
          <TabTitle><Label $size={12}>Vite + React</Label></TabTitle>
          <MdClose size={12} />
          <TabFoot $side="right" />
        </Tab>
        <NewTab><MdAdd size={16} /></NewTab>
        <WindowButtons>
          <WinButton><svg width="10" height="10" stroke="#fff"><path d="M0 4.500h10" /></svg></WinButton>
          <WinButton><svg width="10" height="10" fill="none" stroke="#fff"><path d="M.5 2.500h7v7h-7zM2.500 2.500v-2h7v7h-2" /></svg></WinButton>
          <WinButton><svg width="10" height="10" fill="none" stroke="#fff"><path d="M0 0 10 10M10 0 0 10" /></svg></WinButton>
        </WindowButtons>
      </TabStrip>
      <Toolbar>
        <Slot $dim><MdArrowBack size={17} /></Slot>
        <Slot $dim><MdArrowForward size={17} /></Slot>
        <Slot><MdRefresh size={18} /></Slot>
        <Slot><MdOutlineHome size={19} /></Slot>
        <AddressBar>
          <SiteInfo><MdInfoOutline size={16} /></SiteInfo>
          <Url><Label $size={14} $ls={-0.38} $color="#fff">localhost:</Label><Label $size={14} $ls={-0.38}>5173</Label></Url>
          <Slot $w={32}><MdZoomIn size={19} /></Slot>
          <Slot $w={32}><MdStar size={19} color="#a8c7fa" /></Slot>
        </AddressBar>
        {EXTENSIONS.map((icon, i) => <Slot key={i}>{icon}</Slot>)}
        <Divider />
        <Slot><MdCode size={19} /></Slot>
        <Slot><PanelIcon /></Slot>
        <Slot><Download /></Slot>
        <Slot><MdHistory size={18} /></Slot>
        <Slot><Incognito /></Slot>
        <Slot><QrIcon /></Slot>
        <Divider />
        <Slot><Portrait size={20} /></Slot>
        <Slot><MdMoreVert size={19} /></Slot>
      </Toolbar>
      <Viewport>
        <Page>
          <Header>
            <Logo><Label $size={43} $lh={60} $ls={1.45} $weight={500} $color={CYAN}>Edunex</Label></Logo>
            <Nav>{NAV.map(([t, ls]) => <Label key={t} $size={20} $lh={30} $ls={ls} $color="#dcdcde">{t}</Label>)}</Nav>
            <Actions>
              <GlowButton $w={119} $h={48} $filled><Label $size={17.6} $ls={0.4} $weight={600}>Signup</Label></GlowButton>
              <GlowButton $w={104} $h={48}><Label $size={17.6} $ls={0.1} $weight={600}>Login</Label></GlowButton>
            </Actions>
          </Header>
          <Section>
            <Label $size={38.5} $lh={60} $ls={0.9} $weight={800} $color="#fff">Contact Us</Label>
            <Columns>
              <LeftColumn>
                <Card $w={496} $h={301}>
                  {INFO.map((r) => (
                    <InfoRow key={r.title}>
                      <InfoIcon $w={r.w}>{r.icon}</InfoIcon>
                      <InfoText>
                        <Label $size={17.6} $lh={26} $ls={0.2} $weight={700} $color="#fff">{r.title}</Label>
                        <Label $size={17.6} $lh={26} $ls={r.ls} $color="#c9cad1">{r.body}</Label>
                      </InfoText>
                    </InfoRow>
                  ))}
                </Card>
                <MapCard>
                  <MapTiles />
                  <ZoomControl>
                    <ZoomKey $h={34} $off><svg width="14" height="14" stroke="#bbb" strokeWidth="2"><path d="M0 7h14M7 0v14" /></svg></ZoomKey>
                    <ZoomKey $h={33}><svg width="14" height="14" stroke="#000" strokeWidth="2"><path d="M0 7h14" /></svg></ZoomKey>
                  </ZoomControl>
                  <Attribution><a>Report a problem</a> | © <a>OpenStreetMap</a> contributors</Attribution>
                </MapCard>
              </LeftColumn>
              <Card $w={500} $h={617}>
                <Field $gap={9} $h={107}>
                  <Label $size={17.6} $lh={26} $ls={0.4} $weight={700} $color="#fff">Name</Label>
                  <Input placeholder="Your Name" $ls={0.6} $lift={1} />
                </Field>
                <Field $gap={10} $h={108}>
                  <Label $size={17.6} $lh={26} $ls={0.2} $weight={700} $color="#fff">Email</Label>
                  <Input placeholder="you@example.com" $ls={0.87} $lift={3} />
                </Field>
                <Field $gap={9} $h={206}>
                  <Label $size={17.6} $lh={26} $ls={0.1} $weight={700} $color="#fff">Message</Label>
                  <TextArea placeholder="How can we help you?" $ls={0.42} />
                </Field>
                <GlowButton $w={426} $h={62}><Label $size={20} $lh={28} $weight={700} $color="#fff">Send Message</Label></GlowButton>
              </Card>
            </Columns>
          </Section>
        </Page>
        <Scrollbar><Thumb /></Scrollbar>
      </Viewport>
      <Taskbar>
        <Start><WindowsLogo /></Start>
        <Search><SearchGlass /><Label $size={15} $ls={-0.52}>Type here to search</Label><Comet /></Search>
        <AppSlot $gap={2.5}><TaskViewIcon /></AppSlot>
        {APPS.map((a, i) => <AppSlot key={i} $open={a.open} $active={a.active}>{a.icon}</AppSlot>)}
        <Tray>
          <TrayItem $w={32} $align="flex-start"><WeatherIcon /><WeatherBadge>1</WeatherBadge></TrayItem>
          <TrayItem $w={38} $align="flex-start"><Label $size={14.5} $ls={-0.6}>29°C</Label></TrayItem>
          <TrayItem $w={105} $align="flex-start"><Label $size={14.5} $ls={-0.45}>Mostly cloudy</Label></TrayItem>
          <TrayItem $w={24}><TrayGlyph w={12}><path d="M0 11 6 5l6 6" /></TrayGlyph></TrayItem>
          <TrayItem $w={24}><TrayGlyph w={14}><path d="M2 5h7v7H2zM9 7l3-2v7l-3-2M3 2q4-2 7 0M3 14.500q4 2 7 0" /></TrayGlyph></TrayItem>
          <TrayItem $w={24}><TrayGlyph w={18}><path d="M6 2.500h11v9H4V8M11 11.500v3M7 14.500h8M1 1h4v4H1zM3 5v3h2" /></TrayGlyph></TrayItem>
          <TrayItem $w={24}><TrayGlyph w={18}><path d="M1 5.500h3l4-3.500v12L4 10.500H1zM10.500 5.500q1.500 2.500 0 5M13 3.500q3 4.500 0 9M15.500 1.500q4 6.500 0 13" /></TrayGlyph></TrayItem>
          <TrayItem $w={38}><Label $size={12.5} $ls={-0.8}>ENG</Label></TrayItem>
          <Clock><Label $size={12.5} $lh={18} $ls={-0.6}>03:43 PM</Label><Label $size={12.5} $lh={18} $ls={-0.65}>30-06-2025</Label></Clock>
          <TrayItem $w={50}>
            <svg width="16" height="16" viewBox="0 0 16 16"><path d="M0 0h16v12H5l-3 3v-3H0Z" fill="#fff" /><path d="M3 3.500h10M3 6h10M3 8.500h7" stroke="#25221c" /></svg>
            <CountBadge $x={19} $y={19} $w={21}>26</CountBadge>
          </TrayItem>
          <ShowDesktop />
        </Tray>
      </Taskbar>
    </Screen>
  );
}
